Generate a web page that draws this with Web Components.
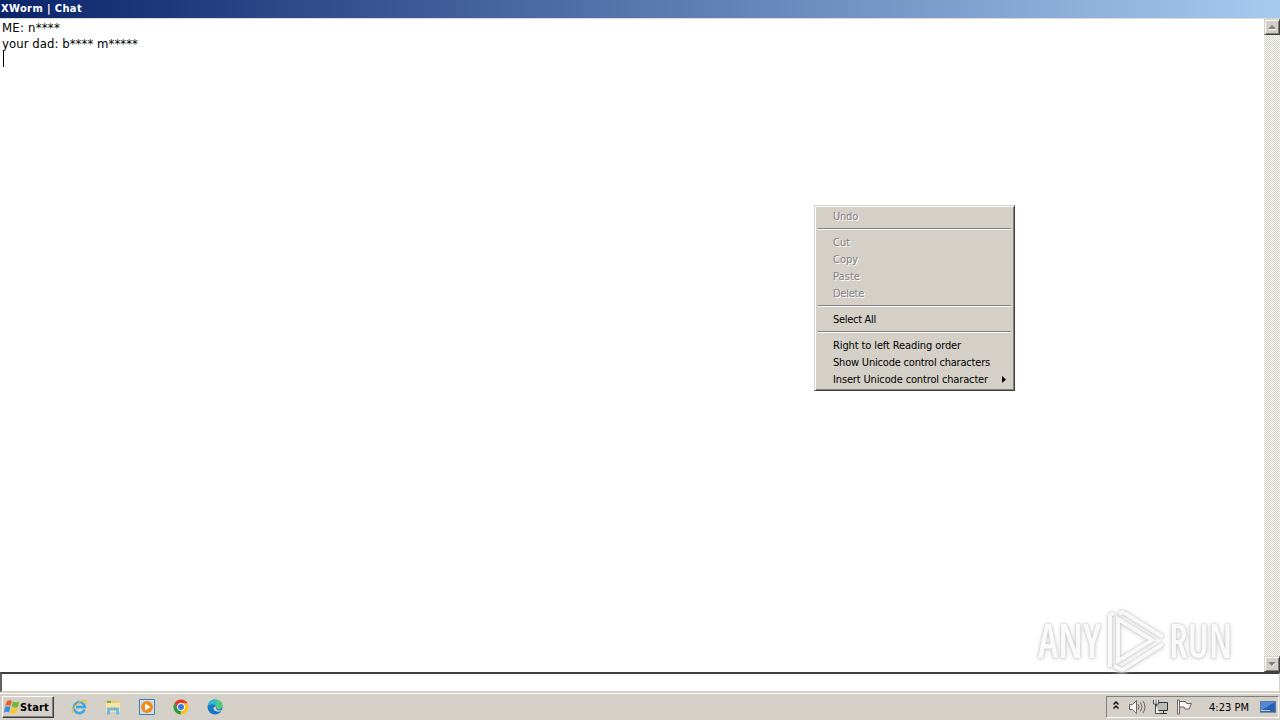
<!DOCTYPE html>
<html lang="en">
<head>
<meta charset="utf-8">
<title>XWorm | Chat</title>
<style>
    body {
        margin: 0;
        width: 1280px;
        height: 720px;
        overflow: hidden;
        background: #d4d0c8;
        font: 11px/17px "DejaVu Sans Condensed", "DejaVu Sans", sans-serif;
        color: #000;
    }
</style>
</head>
<body>
<classic-desktop>
    <title-bar slot="title">XWorm | Chat</title-bar>
    <chat-log slot="log">
        <div><fit-text width="58">ME: n****</fit-text></div>
        <div><fit-text width="136">your dad: b**** m*****</fit-text></div>
    </chat-log>
    <task-bar slot="taskbar"></task-bar>
    <any-logo slot="overlay"></any-logo>
    <context-menu slot="overlay">
        <menu-item disabled width="25">Undo</menu-item>
        <menu-line></menu-line>
        <menu-item disabled width="17">Cut</menu-item>
        <menu-item disabled width="25">Copy</menu-item>
        <menu-item disabled width="27">Paste</menu-item>
        <menu-item disabled width="31">Delete</menu-item>
        <menu-line></menu-line>
        <menu-item width="43">Select All</menu-item>
        <menu-line></menu-line>
        <menu-item width="128">Right to left Reading order</menu-item>
        <menu-item width="157">Show Unicode control characters</menu-item>
        <menu-item width="155" submenu>Insert Unicode control character</menu-item>
    </context-menu>
</classic-desktop>

<script>
/* Spreads its letters so that the text takes the given width */
class FitText extends HTMLElement {
    constructor() {
        super();
        this.attachShadow({ mode: 'open' }).innerHTML = `
            <style>
                :host { display: inline-block; flex: none; white-space: nowrap; }
            </style>
            <slot></slot>`;
    }

    connectedCallback() {
        const width = Number(this.getAttribute('width'));
        const length = this.textContent.length;
        if (!width || !length) return;
        this.style.letterSpacing = '0px';
        const natural = this.getBoundingClientRect().width;
        this.style.letterSpacing = (width - natural) / length + 'px';
    }
}

class ClassicDesktop extends HTMLElement {
    constructor() {
        super();
        this.attachShadow({ mode: 'open' }).innerHTML = `
            <style>
                :host { display: flex; flex-direction: column; width: 1280px; height: 720px; }
                .client { display: flex; height: 653px; background: #fff; }
                .log { flex: 1; }
                .input {
                    box-sizing: border-box;
                    height: 20px;
                    background: #fff;
                    border: 1px solid #d4d0c8;
                    border-top: 2px solid #404040;
                    border-left: 2px solid #606060;
                }
            </style>
            <slot name="title"></slot>
            <div class="client">
                <div class="log"><slot name="log"></slot></div>
                <scroll-bar></scroll-bar>
            </div>
            <div class="input"></div>
            <slot name="taskbar"></slot>
            <slot name="overlay"></slot>`;
    }
}

class TitleBar extends HTMLElement {
    constructor() {
        super();
        this.attachShadow({ mode: 'open' }).innerHTML = `
            <style>
                :host {
                    display: block;
                    box-sizing: border-box;
                    height: 19px;
                    padding-left: 1px;
                    background: linear-gradient(90deg, #0a246a, #a6caf0) padding-box;
                    border-bottom: 1px solid #dddad5;
                    color: #fff;
                    font-weight: bold;
                    line-height: 18px;
                }
            </style>
            <fit-text width="81"></fit-text>`;
        this.shadowRoot.querySelector('fit-text').textContent = this.textContent;
    }
}

class ChatLog extends HTMLElement {
    constructor() {
        super();
        this.attachShadow({ mode: 'open' }).innerHTML = `
            <style>
                :host { display: block; padding: 1px 0 0 2px; font-size: 13px; line-height: 16px; }
                .caret { width: 1px; height: 16px; margin: -1px 0 0 1px; background: #000; }
            </style>
            <slot></slot>
            <div class="caret"></div>`;
    }
}

class ScrollBar extends HTMLElement {
    constructor() {
        super();
        this.attachShadow({ mode: 'open' }).innerHTML = `
            <style>
                :host {
                    display: flex;
                    flex-direction: column;
                    justify-content: space-between;
                    width: 16px;
                    background: repeating-conic-gradient(#d4d0c8 0 25%, #fff 0 50%) 0 0 / 2px 2px;
                }
                .arrow {
                    display: flex;
                    align-items: center;
                    justify-content: center;
                    box-sizing: border-box;
                    height: 16px;
                    background: #d4d0c8;
                    border: 1px solid;
                    border-color: #d4d0c8 #404040 #404040 #d4d0c8;
                    box-shadow: inset 1px 1px #fff, inset -1px -1px #808080;
                }
            </style>
            <div class="arrow"><svg width="8" height="5"><path d="M0 4h8L4 0z" fill="#808080"/><path d="M1 4.5h7" stroke="#fff"/></svg></div>
            <div class="arrow"><svg width="8" height="5"><path d="M0 0h8L4 4z" fill="#808080"/><path d="M4 4.5l4-4" stroke="#fff"/></svg></div>`;
    }
}

class ContextMenu extends HTMLElement {
    constructor() {
        super();
        this.attachShadow({ mode: 'open' }).innerHTML = `
            <style>
                :host {
                    position: absolute;
                    left: 814px;
                    top: 205px;
                    display: block;
                    box-sizing: border-box;
                    width: 201px;
                    height: 186px;
                    padding: 2px 3px;
                    background: #d4d0c8;
                    border: 1px solid;
                    border-color: #d4d0c8 #404040 #404040 #d4d0c8;
                    box-shadow: inset 1px 1px #fff, inset -1px -1px #808080;
                }
            </style>
            <slot></slot>`;
    }
}

class MenuItem extends HTMLElement {
    constructor() {
        super();
        const arrow = this.hasAttribute('submenu')
            ? '<svg width="4" height="7"><path d="M0 0v7l4-3.500z"/></svg>' : '';
        this.attachShadow({ mode: 'open' }).innerHTML = `
            <style>
                :host {
                    display: flex;
                    align-items: center;
                    justify-content: space-between;
                    height: 17px;
                    padding: 0 5px 0 15px;
                }
                :host([disabled]) { color: #808080; text-shadow: 1px 1px #fff; }
            </style>
            <fit-text width="${this.getAttribute('width')}"></fit-text>${arrow}`;
        this.shadowRoot.querySelector('fit-text').textContent = this.textContent;
    }
}

class MenuLine extends HTMLElement {
    constructor() {
        super();
        this.attachShadow({ mode: 'open' }).innerHTML = `
            <style>
                :host { display: block; height: 9px; }
                div { height: 1px; transform: translateY(3px); background: #808080; border-bottom: 1px solid #fff; }
            </style>
            <div></div>`;
    }
}

/* Watermark over the lower right corner */
class AnyLogo extends HTMLElement {
    constructor() {
        super();
        this.attachShadow({ mode: 'open' }).innerHTML = `
            <style>
                :host { position: absolute; left: 1030px; top: 602px; }
                svg { display: block; filter: drop-shadow(0 0 1px #bbb) drop-shadow(0 1px 2px #ddd); }
                text { font: 46px "Open Sans", "Noto Sans", sans-serif; font-weight: 600; font-stretch: condensed; }
            </style>
            <svg width="230" height="76" fill="#fafafa">
                <text x="8" y="56" textLength="63" lengthAdjust="spacingAndGlyphs">ANY</text>
                <text x="139" y="56" textLength="63" lengthAdjust="spacingAndGlyphs">RUN</text>
                <g fill="none" stroke="#f8f8f8" stroke-width="4">
                    <path d="M88 17v42l34-21z"/>
                    <path d="M80 65V13l4-2M89 12l4-2 40 25M84 64l8 4 41-26"/>
                </g>
            </svg>`;
    }
}

class TaskBar extends HTMLElement {
    constructor() {
        super();
        this.attachShadow({ mode: 'open' }).innerHTML = `
            <style>
                :host {
                    display: flex;
                    align-items: flex-start;
                    box-sizing: border-box;
                    height: 28px;
                    padding: 3px 1px 0 2px;
                    background: #d4d0c8;
                    border-top: 1px solid #d4d0c8;
                    box-shadow: inset 0 1px #fff;
                }
                .start {
                    display: flex;
                    align-items: center;
                    box-sizing: border-box;
                    width: 52px;
                    height: 22px;
                    padding-left: 1px;
                    border: 1px solid;
                    border-color: #fff #404040 #404040 #fff;
                    box-shadow: inset -1px -1px #808080;
                    font-weight: bold;
                }
                .launch { display: flex; gap: 18px; padding: 3px 0 0 17px; }
                .tray {
                    display: flex;
                    align-items: center;
                    box-sizing: border-box;
                    width: 173px;
                    height: 22px;
                    margin-left: auto;
                    padding-left: 6px;
                    border: 1px solid;
                    border-color: #808080 #fff #fff #808080;
                }
                .clock { margin: 0 11px 0 16px; }
                svg { display: block; flex: none; }
            </style>
            <div class="start">
                <svg width="16" height="16" viewBox="0 0 16 16">
                    <path d="M3 2q3-1.500 5 0L6.500 7q-2-1.500-5.500 0z" fill="#e8602a"/>
                    <path d="M9 2.500q3 1.500 6.500 0L14 8q-3 1.500-6.500-.5z" fill="#76b83c"/>
                    <path d="M1 8q3-1.500 5.500 0L5 13.500q-2.500-1.500-5 0z" fill="#3f8ed8"/>
                    <path d="M7.300 8.500q3 1.500 6.500.5l-1.500 5q-3 1.500-6.300 0z" fill="#fbc52d"/>
                </svg>
                <fit-text width="29">Start</fit-text>
            </div>
            <div class="launch">
                <svg width="16" height="16" viewBox="0 0 16 16" fill="none">
                    <path d="M13.500 10.500A5.500 5.500 0 1 1 13.800 8H5" stroke="#38a9e1" stroke-width="2.500"/>
                    <path d="M2 14C-1 13 5 4 11 2q6-2 3 3" stroke="#e7bd3f" stroke-width="1.300"/>
                </svg>
                <svg width="16" height="16" viewBox="0 0 16 16">
                    <path d="M1 1h5l1 1h7v11H1z" fill="#e8ca69"/>
                    <path d="M2 2h4v2H2z" fill="#65ad70"/>
                    <path d="M1 4h14v9H1z" fill="#f8e5a0"/>
                    <path d="M2 15.500v-6q0-1 1-1h10q1 0 1 1v6h-3v-4H5v4z" fill="#71b9df"/>
                </svg>
                <svg width="16" height="16" viewBox="0 0 16 16">
                    <path d="M.5.500h15v15H.5z" fill="#c8e2f5" stroke="#427eaf"/>
                    <circle cx="8" cy="8" r="6" fill="#f58a16"/>
                    <path d="M6 4.500v7L11.500 8z" fill="#fff"/>
                </svg>
                <svg width="16" height="16" viewBox="0 0 16 16">
                    <circle cx="8" cy="8" r="7.500" fill="#fbc116"/>
                    <path d="M1.500 4.200A7.500 7.500 0 0 1 14.500 4.200H8L4.700 9.800z" fill="#e33b2e"/>
                    <path d="M1.500 4.200 4.700 9.900 8 11.800 7.500 15.500A7.500 7.500 0 0 1 1.500 4.200z" fill="#249a48"/>
                    <circle cx="8" cy="8" r="3.900" fill="#fff"/>
                    <circle cx="8" cy="8" r="3" fill="#3979df"/>
                </svg>
                <svg width="16" height="16" viewBox="0 0 16 16">
                    <circle cx="8" cy="8" r="7.500" fill="#1677c6"/>
                    <path d="M.7 7C1 2 5 .5 8 .5c5 0 8 4 7.300 7-.5 3-4 3.500-6 2.500 1-4-4-6-8.600-3z" fill="#35b9cd"/>
                    <path d="M9 1q6 .5 6.500 5 0 3-3 4-3 0-3-2z" fill="#54c779"/>
                    <path d="M9.500 7.500c-2 3 2 5 5 3.200l.5.800c-4 2.500-9 .5-8.500-2.500q.5-2 3-1.500z" fill="#d4d0c8"/>
                </svg>
            </div>
            <div class="tray">
                <svg width="80" height="18" viewBox="0 0 80 18">
                    <path d="M.5 6.500 3 4l2.500 2.500M.5 10.500 3 8l2.500 2.500" fill="none" stroke="#000" stroke-width="1.400"/>
                    <g fill="#f7f7f5" stroke="#666">
                        <path d="M16.500 6.500h3l4-4v13l-4-4h-3z"/>
                        <path d="M25 6q2 3 0 6M27.500 4.500q3 4.500 0 9M30 3q4 6 0 12" fill="none"/>
                        <path d="M43.500 4.500h11v8h-11z" fill="#bdbbb6" stroke="#333"/>
                        <path d="M46 15.500h8M50.500 13v2" stroke="#333"/>
                        <path d="M40.500 2v4h5V2M43 2v3M42.500 6v9.500h4" stroke="#444" fill="#fff"/>
                        <path d="M64.500 2v14h2V2zM66.500 3.500h6l1 2h5l-2.500 5.500h-4l-1-2h-4.500z"/>
                    </g>
                </svg>
                <div class="clock"><fit-text width="40">4:23 PM</fit-text></div>
                <svg width="16" height="16" viewBox="0 0 16 16">
                    <path d="M.5 2.500h15v10H.5z" fill="#285eb5" stroke="#557caf"/>
                    <path d="M1 3h14L2 11H1z" fill="#548bd2"/>
                    <path d="M1 11.500h9" stroke="#b8d2ed"/>
                    <path d="M0 13h16" stroke="#294c7d"/>
                </svg>
            </div>`;
    }
}

customElements.define('scroll-bar', ScrollBar);
customElements.define('title-bar', TitleBar);
customElements.define('chat-log', ChatLog);
customElements.define('task-bar', TaskBar);
customElements.define('context-menu', ContextMenu);
customElements.define('menu-item', MenuItem);
customElements.define('menu-line', MenuLine);
customElements.define('any-logo', AnyLogo);
customElements.define('classic-desktop', ClassicDesktop);
// last, as it measures itself in the finished layout
customElements.define('fit-text', FitText);
</script>
</body>
</html>
